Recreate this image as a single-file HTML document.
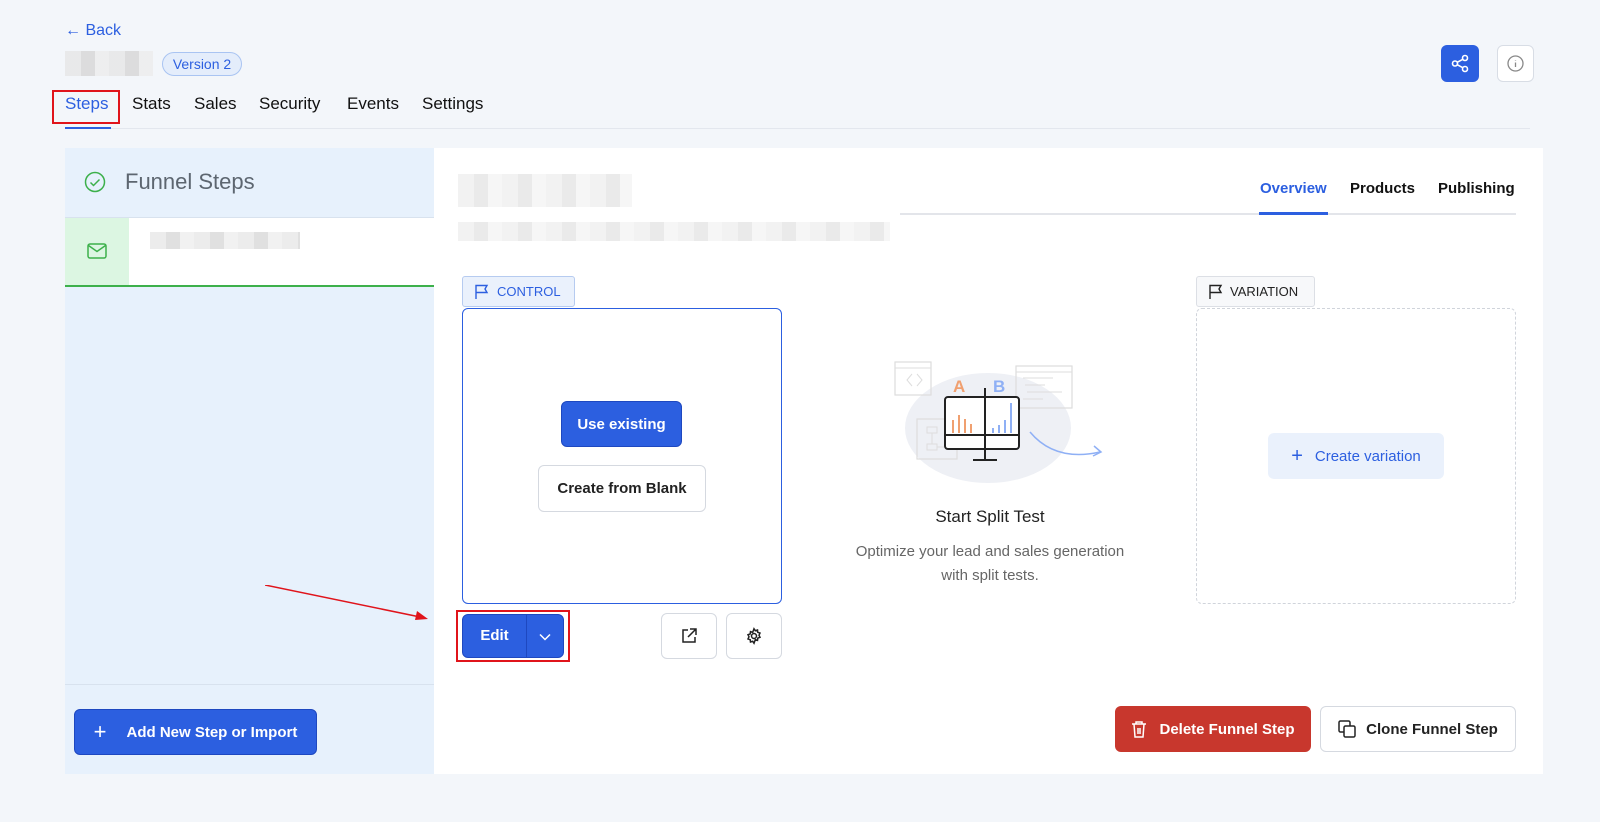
<!DOCTYPE html>
<html><head><meta charset="utf-8"><style>
*{box-sizing:border-box;margin:0;padding:0}
body{width:1600px;height:822px;background:#f3f6fa;font-family:"Liberation Sans",sans-serif;position:relative;overflow:hidden;color:#111}
.a{position:absolute}
.blur{background:repeating-linear-gradient(90deg,#e6e6e6 0 16px,#d6d6d6 16px 30px,#ececec 30px 44px)}
.btn{position:absolute;display:flex;align-items:center;justify-content:center;border-radius:6px;font-size:15px;font-weight:bold}
</style></head><body>
<div class="a" style="left:65px;top:22px;color:#2c5fe0;font-size:16px">← Back</div>
<div class="a blur" style="left:65px;top:51px;width:88px;height:25px;opacity:.8"></div>
<div class="a" style="left:162px;top:52px;height:24px;width:80px;border:1px solid #a9c4f2;background:#e4edfb;border-radius:12px;color:#2c5fe0;font-size:14px;line-height:22px;text-align:center">Version 2</div>
<div class="a" style="left:1441px;top:45px;width:38px;height:37px;background:#2c5fe0;border-radius:6px"><svg width="38" height="37" viewBox="0 0 38 37" fill="none" stroke="#fff" stroke-width="1.6"><circle cx="24" cy="13" r="2.5"/><circle cx="14" cy="18.5" r="2.5"/><circle cx="24" cy="24" r="2.5"/><path d="M16.2 17.3l5.6-3M16.2 19.7l5.6 3"/></svg></div>
<div class="a" style="left:1497px;top:45px;width:37px;height:37px;background:#fff;border:1px solid #d8dde5;border-radius:6px"><svg width="35" height="35" viewBox="0 0 35 35" fill="none" stroke="#888" stroke-width="1.3"><circle cx="17.5" cy="17.5" r="7.5"/><path d="M17.5 16.5v4.5M17.5 14v.5"/></svg></div>
<div class="a" style="left:65px;top:94px;font-size:17px;display:flex;gap:0">
<span style="color:#2c5fe0;width:67px">Steps</span><span style="width:62px">Stats</span><span style="width:65px">Sales</span><span style="width:88px">Security</span><span style="width:75px">Events</span><span>Settings</span></div>
<div class="a" style="left:52px;top:90px;width:68px;height:34px;border:2px solid #e0141b"></div>
<div class="a" style="left:65px;top:128px;width:1465px;height:1px;background:#e3e7ee"></div>
<div class="a" style="left:65px;top:127px;width:46px;height:2px;background:#2c5fe0"></div>
<div class="a" style="left:65px;top:148px;width:369px;height:626px;background:#e7f1fc"></div>
<svg class="a" style="left:84px;top:171px" width="22" height="22" fill="none" stroke="#3db04b" stroke-width="1.5"><circle cx="11" cy="11" r="9.5"/><path d="M6.5 11.5l3 3 6-6"/></svg>
<div class="a" style="left:125px;top:169px;font-size:22px;color:#5d6670">Funnel Steps</div>
<div class="a" style="left:65px;top:217px;width:369px;height:1px;background:#d8e2ee"></div>
<div class="a" style="left:65px;top:218px;width:64px;height:67px;background:#dcf6e2"></div>
<div class="a" style="left:129px;top:218px;width:305px;height:67px;background:#fff"></div>
<svg class="a" style="left:87px;top:243px" width="20" height="16" fill="none" stroke="#3db04b" stroke-width="1.5"><rect x="1" y="1" width="18" height="14" rx="2"/><path d="M1.5 2.5l8.5 6 8.5-6"/></svg>
<div class="a blur" style="left:150px;top:232px;width:150px;height:17px;opacity:.75"></div>
<div class="a" style="left:65px;top:285px;width:369px;height:2px;background:#3db04b"></div>
<div class="a" style="left:65px;top:684px;width:369px;height:1px;background:#d8e2ee"></div>
<div class="btn" style="left:74px;top:709px;width:243px;height:46px;background:#2c5fe0;color:#fff;border:1px solid #1e48c0"><span style="font-size:22px;font-weight:normal;margin-right:20px">+</span>Add New Step or Import</div>
<div class="a" style="left:434px;top:148px;width:1109px;height:626px;background:#fff"></div>
<div class="a blur" style="left:458px;top:174px;width:174px;height:33px;opacity:.5"></div>
<div class="a blur" style="left:458px;top:222px;width:432px;height:19px;opacity:.5"></div>
<div class="a" style="left:900px;top:213px;width:616px;height:2px;background:#e3e5ea"></div>
<div class="a" style="left:1260px;top:180px;font-size:15px;font-weight:bold;color:#2c5fe0">Overview</div>
<div class="a" style="left:1259px;top:212px;width:69px;height:3px;background:#2c5fe0"></div>
<div class="a" style="left:1350px;top:180px;font-size:15px;font-weight:bold">Products</div>
<div class="a" style="left:1438px;top:180px;font-size:15px;font-weight:bold">Publishing</div>
<div class="a" style="left:462px;top:276px;width:113px;height:31px;background:#eaf1fc;border:1px solid #b6cbf0;border-radius:3px;color:#2c5fe0;font-size:13px;line-height:30px;padding-left:34px">CONTROL</div>
<svg class="a" style="left:474px;top:284px" width="16" height="16" fill="none" stroke="#2c5fe0" stroke-width="1.4"><path d="M2 15V1.5h11l-2 3.5 2 3.5H2"/></svg>
<div class="a" style="left:462px;top:308px;width:320px;height:296px;border:1.5px solid #2c5fe0;border-radius:6px"></div>
<div class="btn" style="left:561px;top:401px;width:121px;height:46px;background:#2c5fe0;color:#fff;border:1px solid #1e48c0">Use existing</div>
<div class="btn" style="left:538px;top:465px;width:168px;height:47px;background:#fff;color:#222;border:1.5px solid #d5d9e0">Create from Blank</div>
<div class="a" style="left:456px;top:610px;width:114px;height:52px;border:2px solid #e0141b"></div>
<div class="btn" style="left:462px;top:614px;width:102px;height:44px;background:#2c5fe0;color:#fff;border:1px solid #1e48c0"><span style="width:64px;text-align:center;border-right:1px solid #1e48c0;line-height:42px">Edit</span><span style="flex:1;text-align:center"><svg width="12" height="8" fill="none" stroke="#fff" stroke-width="1.5"><path d="M1 1.5l5 5 5-5"/></svg></span></div>
<div class="btn" style="left:661px;top:613px;width:56px;height:46px;border:1.5px solid #d5d9e0"><svg width="18" height="18" fill="none" stroke="#222" stroke-width="1.5"><path d="M8 3H3v12h12v-5M10 2h6v6M16 2l-8 8"/></svg></div>
<div class="btn" style="left:726px;top:613px;width:56px;height:46px;border:1.5px solid #d5d9e0"><svg width="18" height="18" viewBox="0 0 18 18" fill="none" stroke="#222" stroke-width="1.5"><circle cx="9" cy="9" r="2.5"/><path d="M9 1.8l1.3 1.9 2.2-.7.3 2.3 2.2.8-1 2.1 1 2.1-2.2.8-.3 2.3-2.2-.7L9 16.2l-1.3-1.9-2.2.7-.3-2.3-2.2-.8 1-2.1-1-2.1 2.2-.8.3-2.3 2.2.7z"/></svg></div>
<svg class="a" style="left:265px;top:585px" width="170" height="40"><path d="M0 0L160 33" stroke="#e0141b" stroke-width="1.5"/><path d="M152 26l11 8-13 1z" fill="#e0141b"/></svg>
<svg class="a" style="left:890px;top:360px" width="215" height="130" fill="none">
<ellipse cx="98" cy="68" rx="83" ry="55" fill="#eef0f5"/>
<rect x="5" y="2" width="36" height="33" stroke="#ddd" stroke-width="1.2"/><path d="M5 8h36M22 14l-5 6 5 6M27 14l5 6-5 6" stroke="#ddd"/>
<rect x="126" y="6" width="56" height="42" stroke="#ddd" stroke-width="1.2"/><path d="M126 12h56M133 18h30M135 25h20M137 32h35M133 39h20" stroke="#ddd"/>
<rect x="27" y="59" width="40" height="40" stroke="#ddd" stroke-width="1.2"/><path d="M37 67h10v6H37zM37 84h10v6H37zM42 73v11M47 87h10" stroke="#ddd"/>
<text x="63" y="32" fill="#f0a070" font-family="Liberation Sans" font-size="17" font-weight="bold">A</text>
<text x="103" y="32" fill="#8fb0f5" font-family="Liberation Sans" font-size="17" font-weight="bold">B</text>
<rect x="55" y="37" width="74" height="52" rx="3" stroke="#222" stroke-width="2" fill="#fff"/><path d="M55 75h74" stroke="#222" stroke-width="2"/>
<path d="M95 28v72M83 100h24" stroke="#222" stroke-width="2"/>
<path d="M63 73v-13M69 73v-18M75 73v-14M81 73v-9" stroke="#f0a070" stroke-width="2"/>
<path d="M103 73v-5M109 73v-8M115 73v-13M121 73v-30" stroke="#8fb0f5" stroke-width="2"/>
<path d="M140 72q25 30 70 20" stroke="#8fb0f5" stroke-width="1.5"/><path d="M204 86l7 6-8 4" stroke="#8fb0f5" stroke-width="1.5"/>
</svg>
<div class="a" style="left:810px;top:507px;width:360px;text-align:center;font-size:17px;color:#222">Start Split Test</div>
<div class="a" style="left:810px;top:540px;width:360px;text-align:center;font-size:15px;color:#666;line-height:24px">Optimize your lead and sales generation<br>with split tests.</div>
<div class="a" style="left:1196px;top:276px;width:119px;height:31px;background:#f7f8fa;border:1px solid #dcdfe5;border-radius:3px;color:#222;font-size:13px;line-height:30px;padding-left:33px">VARIATION</div>
<svg class="a" style="left:1208px;top:284px" width="16" height="16" fill="none" stroke="#222" stroke-width="1.4"><path d="M2 15V1.5h11l-2 3.5 2 3.5H2"/></svg>
<div class="a" style="left:1196px;top:308px;width:320px;height:296px;border:1.5px dashed #d0d4db;border-radius:6px"></div>
<div class="btn" style="left:1268px;top:433px;width:176px;height:46px;background:#eaf1fc;color:#2c5fe0;font-weight:normal;font-size:15px"><span style="font-size:20px;margin-right:12px">+</span>Create variation</div>
<div class="btn" style="left:1115px;top:706px;width:196px;height:46px;background:#c8372d;color:#fff"><svg width="16" height="18" fill="none" stroke="#fff" stroke-width="1.5" style="margin-right:12px"><path d="M1 4h14M5 4V2h6v2M3 4l1 13h8l1-13M7 8v6M9 8v6"/></svg>Delete Funnel Step</div>
<div class="btn" style="left:1320px;top:706px;width:196px;height:46px;background:#fff;color:#222;border:1.5px solid #d5d9e0"><svg width="18" height="18" fill="none" stroke="#222" stroke-width="1.5" style="margin-right:10px"><rect x="1" y="1" width="11" height="11" rx="1.5"/><rect x="6" y="6" width="11" height="11" rx="1.5" fill="#fff"/></svg>Clone Funnel Step</div>
</body></html>
